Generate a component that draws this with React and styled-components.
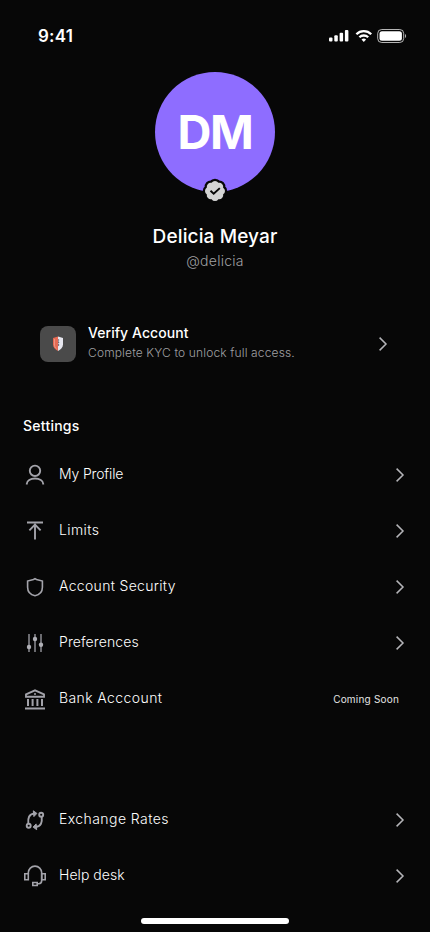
import React from 'react';
import styled, { createGlobalStyle } from 'styled-components';

const GlobalStyle = createGlobalStyle`
  * {
    box-sizing: border-box;
  }
  body {
    margin: 0;
    background: #070707;
    font-family: Inter, "Liberation Sans", sans-serif;
  }
`;

const Screen = styled.main`
  width: 430px;
  height: 932px;
  display: flex;
  flex-direction: column;
  background: #070707;
  color: #fff;
  overflow: hidden;
`;

const StatusBar = styled.header`
  display: flex;
  justify-content: space-between;
  height: 72px;
  padding: 26px 23px 0 38px;
`;

const Time = styled.span`
  font-size: 17px;
  line-height: 20px;
  font-weight: 600;
  letter-spacing: 0.2px;
`;

const StatusIcons = styled.svg`
  width: 79px;
  height: 18px;
  margin-top: 2px;
`;

const Profile = styled.section`
  display: flex;
  flex-direction: column;
  align-items: center;
`;

const Avatar = styled.div`
  position: relative;
  width: 120px;
  height: 120px;
  border-radius: 50%;
  background: #8e6dff;
  display: flex;
  align-items: center;
  justify-content: center;
`;

const Initials = styled.span`
  font-size: 47px;
  line-height: 56px;
  font-weight: 700;
  letter-spacing: -1.3px;
  margin-top: -1px;
`;

const Badge = styled.svg`
  position: absolute;
  left: 48px;
  top: 107px;
  width: 24px;
  height: 24px;
  overflow: visible;
`;

const Text = styled.span`
  font-size: ${props => props.$size || 14}px;
  line-height: ${props => props.$line || 20}px;
  font-weight: ${props => props.$weight || 400};
  letter-spacing: ${props => props.$spacing || 0}px;
  color: ${props => props.$color || '#e4e4e4'};
  white-space: nowrap;
`;

const Name = styled.h1`
  margin: 32px 0 0;
  font-size: 19px;
  line-height: 26px;
  font-weight: 500;
  letter-spacing: 0.13px;
`;

const Handle = styled.p`
  margin: 1px 0 0;
  font-size: 14px;
  line-height: 20px;
  font-weight: 300;
  letter-spacing: 0.25px;
  color: #a0a0a3;
`;

const VerifyCard = styled.section`
  display: flex;
  align-items: center;
  height: 40px;
  margin: 53px 40px 0;
`;

const VerifyIcon = styled.div`
  width: 36px;
  height: 36px;
  margin-right: 12px;
  border-radius: 8px;
  background: #4a4a4a;
  display: flex;
  align-items: center;
  justify-content: center;
`;

const VerifyText = styled.div`
  flex: 1;
  display: flex;
  flex-direction: column;
  margin-top: -3px;
`;

const SectionTitle = styled.h2`
  margin: 51px 0 0 23px;
  font-size: 14px;
  line-height: 22px;
  font-weight: 500;
  letter-spacing: 0.25px;
`;

const Menu = styled.nav`
  display: flex;
  flex-direction: column;
  margin-top: ${props => props.$top}px;
`;

const Row = styled.div`
  display: flex;
  align-items: center;
  height: 56px;
  padding: 0 23px;
`;

const RowIcon = styled.svg`
  width: 24px;
  height: 24px;
  margin-right: 12px;
  fill: none;
  stroke: #a3a3aa;
  stroke-width: 1.9;
`;

const RowLabel = styled(Text)`
  flex: 1;
  padding-bottom: 2px;
`;

const Soon = styled(Text)`
  margin-right: 8px;
`;

const ChevronSvg = styled.svg`
  width: 14px;
  height: 20px;
  fill: none;
  stroke: #b4b4b8;
  stroke-width: 1.5;
`;

const HomeIndicator = styled.div`
  width: 148px;
  height: 5.5px;
  margin: 14px auto 0;
  border-radius: 3px;
  background: #fff;
`;

const Chevron = () => (
  <ChevronSvg viewBox="0 0 14 20">
    <path d="M3.6 3.6 10 10l-6.4 6.4" />
  </ChevronSvg>
);

const icons = {
  user: (
    <>
      <circle cx="12" cy="7.800" r="5.200" />
      <path d="M3.800 21.500v-.7c0-3.200 3.700-5.300 8.200-5.300s8.200 2.100 8.200 5.300v.7" />
    </>
  ),
  limit: <path d="M4 3.500h16M12 20.500V5M6.400 11.300 12 5.700l5.600 5.600" />,
  shield: <path strokeWidth="1.6" d="m12 3.600 1.500.9 5.900 1.600v6.100c0 4.800-3.400 7.700-7.400 8.600-4-.9-7.400-3.800-7.400-8.600V6.100l5.900-1.600Z" />,
  sliders: (
    <>
      <path strokeWidth="1.8" stroke="#77777c" d="M6 3v18M12 3v18M18 3v18" />
      <g fill="#b0b0b6" stroke="none">
        <circle cx="6" cy="16" r="2.200" />
        <circle cx="12" cy="8" r="2.200" />
        <circle cx="18" cy="13.700" r="2.200" />
      </g>
    </>
  ),
  bank: (
    <>
      <path d="M3 9.700V7.400L12 3.300l9 4.100v2.300Z" />
      <path strokeWidth="2" d="M5 12v7M9.600 12v7M14.400 12v7M19 12v7" />
      <path strokeWidth="2" d="M2 21.500h20" />
      <circle cx="12" cy="7" r="1" fill="#a3a3aa" stroke="none" />
    </>
  ),
  exchange: (
    <>
      <circle cx="5.700" cy="17.800" r="2" />
      <circle cx="18.200" cy="6.700" r="2" />
      <path d="M5.300 15.700c-.6-5.500.6-9.700 6-10.200M18.700 8.800c.6 5.500-.6 9.700-6 10.200" />
      <path fill="#a3a3aa" strokeWidth="1" d="m10.300 2.800 3.600 2.600-3 3.200ZM13.700 21.700l-3.600-2.600 3-3.200Z" />
    </>
  ),
  headset: (
    <>
      <path strokeWidth="1.600" d="M5.300 10V8.800a6.700 6.700 0 0 1 13.400 0v7.700c0 2-.9 3.200-3 3.200h-1.500" />
      <path strokeWidth="1.600" d="M1.800 9.800h3.500v6H1.800zM18.700 9.800h3.500v6h-3.500zM9.800 18.500h4.400v3H9.800z" />
    </>
  ),
};

const settings = [
  { icon: 'user', label: 'My Profile', spacing: -0.15 },
  { icon: 'limit', label: 'Limits', spacing: 0.4 },
  { icon: 'shield', label: 'Account Security', spacing: 0.32 },
  { icon: 'sliders', label: 'Preferences', spacing: 0.1 },
  { icon: 'bank', label: 'Bank Acccount', spacing: 0.4, soon: true },
];

const support = [
  { icon: 'exchange', label: 'Exchange Rates', spacing: 0.43 },
  { icon: 'headset', label: 'Help desk', spacing: 0.05 },
];

const MenuRow = ({ item }) => (
  <Row>
    <RowIcon viewBox="0 0 24 24">{icons[item.icon]}</RowIcon>
    <RowLabel $weight={300} $color="#fff" $spacing={item.spacing}>{item.label}</RowLabel>
    {item.soon ? <Soon $size={10} $line={14} $spacing={0.2}>Coming Soon</Soon> : <Chevron />}
  </Row>
);

function App() {
  return (
    <>
      <GlobalStyle />
      <Screen>
        <StatusBar>
          <Time>9:41</Time>
          <StatusIcons viewBox="0 0 79 18" fill="#fff">
            <rect x="1" y="9.500" width="3.500" height="4" rx="1" />
            <rect x="6.300" y="7.300" width="3.500" height="6.200" rx="1" />
            <rect x="11.600" y="4.800" width="3.500" height="8.700" rx="1" />
            <rect x="16.900" y="2" width="3.500" height="11.500" rx="1" />
            <g fill="none" stroke="#fff" strokeWidth="2.300">
              <path d="M28.400 6.200a10.400 10.400 0 0 1 14.800 0" />
              <path d="M31.400 9.300a6.300 6.300 0 0 1 8.800 0" />
            </g>
            <path d="m35.800 13.900-2.300-2.400a3.400 3.400 0 0 1 4.600 0Z" />
            <rect x="49.700" y="1.500" width="26" height="13" rx="4" fill="none" stroke="#fff" strokeOpacity=".7" />
            <rect x="51.500" y="3.200" width="22.400" height="9.600" rx="2.500" />
            <path d="M77 6c1.500.5 1.500 3.600 0 4.100Z" fillOpacity=".7" />
          </StatusIcons>
        </StatusBar>

        <Profile>
          <Avatar>
            <Initials>DM</Initials>
            <Badge viewBox="0 0 24 24">
              <path
                fill="#d4d4d4"
                stroke="#070707"
                strokeWidth="4.500"
                paintOrder="stroke"
                d="M3.850 8.620a4 4 0 0 1 4.780-4.770 4 4 0 0 1 6.740 0 4 4 0 0 1 4.780 4.780 4 4 0 0 1 0 6.740 4 4 0 0 1-4.770 4.780 4 4 0 0 1-6.750 0 4 4 0 0 1-4.780-4.770 4 4 0 0 1 0-6.760Z"
              />
              <path d="m7.500 11.800 3.200 3 6.100-5.700" fill="none" stroke="#070707" strokeWidth="1.900" />
            </Badge>
          </Avatar>
          <Name>Delicia Meyar</Name>
          <Handle>@delicia</Handle>
        </Profile>

        <VerifyCard>
          <VerifyIcon>
            <svg width="12" height="16" viewBox="0 0 12 16">
              <path d="M6 .500 1 2v6.500c0 3 2.200 5 5 6.500Z" fill="#e56a54" />
              <path d="m6 .500 5 1.500v6.500c0 3-2.200 5-5 6.500Z" fill="#e6e6ee" />
              <path d="M2.500 3v6c0 1.700.8 2.800 2 3.700" fill="none" stroke="#f0a08f" strokeWidth=".8" />
              <path d="m6 3 1.500 1L6 5l1.500 1.200L6 7.500 7.500 9 6 10.200" fill="#73606a" />
            </svg>
          </VerifyIcon>
          <VerifyText>
            <Text $weight={500} $color="#fff" $spacing={0.06}>Verify Account</Text>
            <Text $size={12} $line={19} $weight={300} $color="#a0a0a3" $spacing={0.14}>Complete KYC to unlock full access.</Text>
          </VerifyText>
          <Chevron />
        </VerifyCard>

        <SectionTitle>Settings</SectionTitle>
        <Menu $top={10}>
          {settings.map(item => <MenuRow key={item.label} item={item} />)}
        </Menu>
        <Menu $top={65}>
          {support.map(item => <MenuRow key={item.label} item={item} />)}
        </Menu>
        <HomeIndicator />
      </Screen>
    </>
  );
}

export default App;
